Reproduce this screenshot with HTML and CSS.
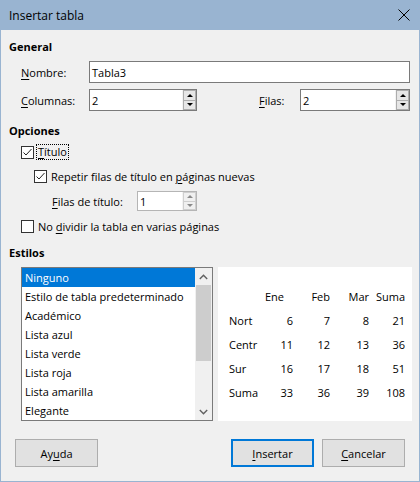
FILE: index.html
```html
<!DOCTYPE html>
<html lang="es">
<head>
<meta charset="utf-8">
<title>Insertar tabla</title>
<link rel="stylesheet" href="styles.css">
</head>
<body>
<div class="window">
  <div class="titlebar">
    <span class="title">Insertar tabla</span>
    <svg class="close" width="12" height="12" viewBox="0 0 12 12"><path d="M0.5 0.5 L11.5 11.5 M11.5 0.5 L0.5 11.5" stroke="#000" stroke-width="1" fill="none"/></svg>
  </div>
  <div class="content">
    <div class="sect s-general">General</div>
    <div class="row r-nombre">
      <span class="lbl l68"><u>N</u>ombre:</span>
      <div class="field w321"><span class="val">Tabla3</span></div>
    </div>
    <div class="row r-cols">
      <span class="lbl l68"><u>C</u>olumnas:</span>
      <div class="field spin w108"><span class="val">2</span><div class="btns"><span class="up"></span><span class="dn"></span></div></div>
      <span class="lbl l-filas"><u>F</u>ilas:</span>
      <div class="field spin w110"><span class="val">2</span><div class="btns"><span class="up"></span><span class="dn"></span></div></div>
    </div>
    <div class="sect s-opc">Opciones</div>
    <div class="chk c-titulo">
      <span class="box"><svg width="11" height="11" viewBox="0 0 11 11"><path d="M1.5 5.5 L4 8 L9.5 2" stroke="#222" stroke-width="1" fill="none"/></svg></span>
      <span class="focus"><u>T</u>ítulo</span>
    </div>
    <div class="chk c-repetir">
      <span class="box"><svg width="11" height="11" viewBox="0 0 11 11"><path d="M1.5 5.5 L4 8 L9.5 2" stroke="#222" stroke-width="1" fill="none"/></svg></span>
      <span>Repetir filas de título en <u>p</u>áginas nuevas</span>
    </div>
    <div class="row r-filast">
      <span class="lbl l85"><u>F</u>ilas de título:</span>
      <div class="field spin w60 dim"><span class="val">1</span><div class="btns"><span class="up"></span><span class="dn"></span></div></div>
    </div>
    <div class="chk c-nodiv">
      <span class="box"></span>
      <span>No <u>d</u>ividir la tabla en varias páginas</span>
    </div>
    <div class="sect s-est">Estilos</div>
    <div class="styles">
      <div class="list">
        <div class="items">
          <div class="item sel">Ninguno</div>
          <div class="item">Estilo de tabla predeterminado</div>
          <div class="item">Académico</div>
          <div class="item">Lista azul</div>
          <div class="item">Lista verde</div>
          <div class="item">Lista roja</div>
          <div class="item">Lista amarilla</div>
          <div class="item">Elegante</div>
        </div>
        <div class="scroll">
          <div class="arrow"><svg width="9" height="6" viewBox="0 0 9 6"><path d="M0.8 5 L4.5 1.3 L8.2 5" stroke="#606060" stroke-width="1.4" fill="none"/></svg></div>
          <div class="track"><div class="thumb"></div></div>
          <div class="arrow"><svg width="9" height="6" viewBox="0 0 9 6"><path d="M0.8 1 L4.5 4.7 L8.2 1" stroke="#606060" stroke-width="1.4" fill="none"/></svg></div>
        </div>
      </div>
      <div class="preview">
        <div class="ptable">
          <span></span><span class="h h1">Ene</span><span class="h">Feb</span><span class="h">Mar</span><span class="h">Suma</span>
          <span class="rl">Nort</span><span>6</span><span>7</span><span>8</span><span>21</span>
          <span class="rl">Centr</span><span>11</span><span>12</span><span>13</span><span>36</span>
          <span class="rl">Sur</span><span>16</span><span>17</span><span>18</span><span>51</span>
          <span class="rl">Suma</span><span>33</span><span>36</span><span>39</span><span>108</span>
        </div>
      </div>
    </div>
    <div class="buttons">
      <div class="btn">Ay<u>u</u>da</div>
      <div class="spacer"></div>
      <div class="btn default"><u>I</u>nsertar</div>
      <div class="btn"><u>C</u>ancelar</div>
    </div>
  </div>
</div>
</body>
</html>
```

FILE: styles.css
```css
* { box-sizing: border-box; }
html, body { margin: 0; padding: 0; }
body {
  font-family: "Open Sans", "Liberation Sans", sans-serif;
  font-size: 11px;
  color: #000;
  background: #f0f0f0;
}
u { text-decoration: underline; text-underline-offset: 2px; text-decoration-thickness: 1px; }
.window {
  width: 420px;
  height: 482px;
  border: 1px solid #99b4d1;
  border-top: none;
  background: #f0f0f0;
  display: flex;
  flex-direction: column;
}
.titlebar {
  height: 30px;
  background: #99b4d1;
  display: flex;
  align-items: center;
  padding: 0 8px 0 9px;
  margin: 0 -1px;
}
.title { font-size: 12px; flex: 1; }
.close { margin-right: 2px; }
.content {
  padding-left: 8px;
  display: flex;
  flex-direction: column;
}
.sect { font-weight: bold; height: 16px; line-height: 16px; }
.s-general { margin-top: 9px; }
.s-opc { margin-top: 12px; }
.s-est { margin-top: 9px; }
.row { display: flex; align-items: center; padding-left: 12px; }
.row > * { flex-shrink: 0; }
.r-nombre { margin-top: 6px; height: 22px; }
.r-cols { margin-top: 6px; height: 22px; }
.r-filast { margin-top: 5px; height: 20px; padding-left: 43px; }
.lbl { white-space: nowrap; }
.l68 { width: 68px; }
.l85 { width: 85px; }
.l-filas { margin-left: 62px; width: 41px; }
.field {
  height: 100%;
  background: #fff;
  border: 1px solid #7a7a7a;
  display: flex;
  align-items: stretch;
}
.w321 { width: 321px; }
.w108 { width: 108px; }
.w110 { width: 110px; }
.w60 { width: 60px; }
.val { flex: 1; padding-left: 2px; display: flex; align-items: center; }
.btns {
  width: 14px;
  display: flex;
  flex-direction: column;
  border-left: 1px solid #f3f3f3;
}
.btns span {
  flex: 1;
  border: 1px solid #adadad;
  background: #e6e6e6;
  display: flex;
  align-items: center;
  justify-content: center;
}
.btns span + span { border-top: none; }
.btns .up::after {
  content: "";
  border-left: 3px solid transparent;
  border-right: 3px solid transparent;
  border-bottom: 3px solid #000;
}
.btns .dn::after {
  content: "";
  border-left: 3px solid transparent;
  border-right: 3px solid transparent;
  border-top: 3px solid #000;
}
.dim { border-color: #b5b5b5; }
.dim .btns span { border-color: #cfcfcf; background: #f0f0f0; }
.dim .btns .up::after { border-bottom-color: #8a8a8a; }
.dim .btns .dn::after { border-top-color: #8a8a8a; }
.chk { display: flex; align-items: center; height: 20px; }
.chk .box {
  width: 13px;
  height: 13px;
  border: 1px solid #333;
  background: #fff;
  margin-right: 4px;
  display: flex;
  align-items: center;
  justify-content: center;
}
.c-titulo { margin-top: 3px; padding-left: 12px; }
.c-repetir { margin-top: 4px; padding-left: 25px; }
.c-nodiv { margin-top: 5px; padding-left: 12px; }
.focus { outline: 1px dotted #000; outline-offset: 0; padding: 0 1px; margin-left: -1px; line-height: 14px; }
.styles { display: flex; margin-top: 6px; padding-left: 12px; height: 154px; }
.list {
  width: 192px;
  border: 1px solid #7a7a7a;
  background: #fff;
  display: flex;
}
.items { flex: 1; }
.item { height: 19px; line-height: 19px; padding-left: 3px; white-space: nowrap; }
.item.sel { background: #0078d7; color: #fff; }
.scroll { width: 17px; background: #f0f0f0; display: flex; flex-direction: column; }
.arrow { height: 17px; display: flex; align-items: center; justify-content: center; }
.track { flex: 1; padding: 0 1px; }
.thumb { height: 76px; background: #cdcdcd; }
.preview {
  margin-left: 5px;
  width: 194px;
  background: #fff;
  padding: 18px 0 0 11px;
}
.ptable {
  display: grid;
  grid-template-columns: 29px 35px 37px 39px 36px;
  grid-auto-rows: 24px;
  line-height: 24px;
}
.ptable span { text-align: right; }
.ptable .rl { text-align: left; }
.ptable .h1 { padding-right: 9px; }
.buttons { display: flex; margin-top: 18px; padding-left: 6px; padding-right: 14px; }
.spacer { flex: 1; }
.btn {
  width: 83px;
  height: 28px;
  border: 1px solid #adadad;
  background: #e1e1e1;
  display: flex;
  align-items: center;
  justify-content: center;
}
.btn + .btn { margin-left: 8px; }
.btn.default { border: 2px solid #0078d7; }
.spacer + .btn { margin-left: 0; }
```
